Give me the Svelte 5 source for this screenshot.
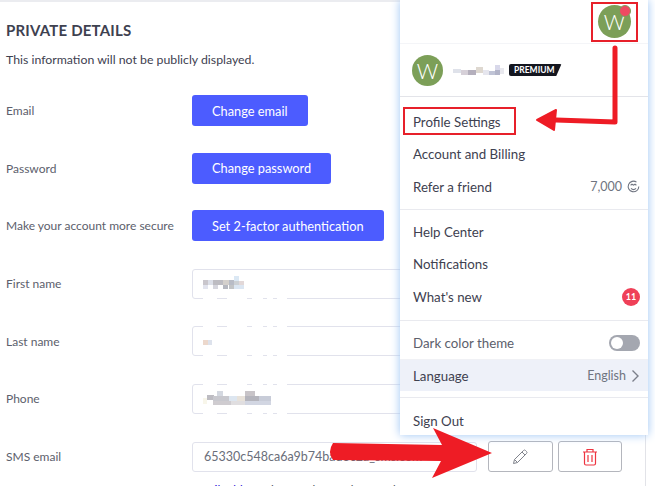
<script>
  const rows = [
    { label: "Email", button: "Change email" },
    { label: "Password", button: "Change password" },
    { label: "Make your account more secure", button: "Set 2-factor authentication" },
    { label: "First name", input: true, blur: "first" },
    { label: "Last name", input: true, blur: "last" },
    { label: "Phone", input: true, blur: "phone" }
  ];

  // white smudges where the censoring ran over the input borders
  const smudge = (y, h) =>
    [[10, 14], [34, 20], [59, 11], [74, 6], [84, 10]].map(([x, w]) => [x, y, w, h, "#fff"]);

  // censored bits of the screenshot: [x, y, w, h, colour]
  const blurs = {
    first: [
      [10, 7, 5, 5, "#c9c6cc"], [15, 7, 5, 5, "#dcdfe8"], [20, 7, 10, 5, "#bdbcc2"], [30, 7, 6, 5, "#d4d0cc"],
      [36, 7, 5, 5, "#b8bcc6"], [41, 3, 5, 5, "#dbe8f4"], [41, 8, 5, 5, "#ccd0d4"], [46, 8, 5, 5, "#e2d8d8"],
      [10, 12, 5, 4, "#e2e4ee"], [20, 12, 5, 4, "#d6d6de"], [30, 12, 5, 4, "#b6b8c0"], [36, 12, 5, 4, "#c2c4c6"],
      [41, 12, 10, 4, "#dbe6f2"], ...smudge(23, 5)
    ],
    last: [[10, 10, 5, 5, "#ecd8cc"], [15, 10, 4, 5, "#dde2ec"], ...smudge(-5, 5), ...smudge(20, 10)],
    phone: [
      [14, 7, 7, 5, "#bdbcc2"], [24, 3, 6, 5, "#d4d8e0"], [20, 8, 16, 5, "#c8c8ce"], [36, 8, 8, 5, "#dde6f0"],
      [44, 8, 8, 5, "#e8e2da"], [52, 3, 10, 5, "#c8c4c8"], [52, 8, 14, 5, "#b4b4bc"], [66, 8, 12, 5, "#c8ccd8"],
      [20, 13, 18, 4, "#cfccd0"], [38, 13, 14, 4, "#e0dee0"], [52, 13, 26, 4, "#d2d6e2"], [10, 10, 4, 6, "#f8f6ea"],
      ...smudge(-7, 6), ...smudge(23, 6)
    ]
  };
  const nameBlur = [
    [0, 5, 8, 4, "#dfe2ea"], [8, 6, 7, 5, "#d6d0d8"], [15, 6, 8, 5, "#b4afbc"], [23, 3, 7, 6, "#ded8d0"],
    [30, 6, 6, 5, "#e6e6ee"], [36, 7, 6, 4, "#c0c4d6"], [42, 1, 5, 5, "#d8d8ea"], [42, 6, 5, 5, "#b2b4c8"],
    [47, 4, 4, 6, "#e8e8ee"]
  ];
</script>

<div class="page">
  <h2>PRIVATE DETAILS</h2>
  <p class="sub">This information will not be publicly displayed.</p>

  {#each rows as row}
    <div class="row">
      <span class="label">{row.label}</span>
      {#if row.input}
        <div class="input">
          <svg class="mosaic" width="100" height="24">
            {#each blurs[row.blur] as b}
              <rect x={b[0]} y={b[1]} width={b[2]} height={b[3]} fill={b[4]} />
            {/each}
          </svg>
        </div>
      {:else}
        <button class="primary">{row.button}</button>
      {/if}
    </div>
  {/each}

  <div class="row">
    <span class="label">SMS email</span>
    <div class="sms">
      <div class="input short">65330c548ca6a9b74bad8c2a_sms.com</div>
      <button class="icon-btn" aria-label="Edit">
        <svg width="16" height="16" viewBox="0 0 16 16" fill="none" stroke="#80838c" stroke-width="1">
          <path d="M1.5 14.5l1-4L11.5 1.5a1.4 1.4 0 0 1 2 0l1 1a1.4 1.4 0 0 1 0 2L5.5 13.5z" />
          <path d="M2.5 10.5l3 3M10 3l3 3" />
        </svg>
      </button>
      <button class="icon-btn" aria-label="Delete">
        <svg width="16" height="18" viewBox="0 0 16 18" fill="none" stroke="#ee3440" stroke-width="1.2">
          <path d="M1 4h14M5 4V1.5h6V4M2.5 4v11.5a1.5 1.5 0 0 0 1.5 1.5h8a1.5 1.5 0 0 0 1.5-1.5V4M6 7v7M10 7v7" />
        </svg>
      </button>
    </div>
  </div>
  <p class="hint"><span>Email address</span> that can be used to send text messages to</p>
</div>

<aside class="menu">
  <div class="menu-top">
    <div class="avatar small">W<span class="dot"></span></div>
  </div>
  <div class="menu-user">
    <div class="avatar">W</div>
    <svg class="name-blur" width="51" height="12">
      {#each nameBlur as b}
        <rect x={b[0]} y={b[1]} width={b[2]} height={b[3]} fill={b[4]} />
      {/each}
    </svg>
    <span class="premium">PREMIUM</span>
  </div>
  <div class="group first">
    <div class="item">Profile Settings</div>
    <div class="item">Account and Billing</div>
    <div class="item">Refer a friend
      <span class="side">7,000
        <svg width="13" height="13" viewBox="0 0 13 13" fill="none" stroke="#6f7480" stroke-width="1.1">
          <path d="M11.8 6.5A5.3 5.3 0 1 1 9.5 2.1" />
          <path d="M3.6 5.2l1.4-1 1.5 1 1.5-1 1.4 1M4 8.3c1.4 1.4 3.6 1.4 5 0" />
        </svg>
      </span>
    </div>
  </div>
  <div class="group second">
    <div class="item">Help Center</div>
    <div class="item">Notifications</div>
    <div class="item">What's new <span class="count">11</span></div>
  </div>
  <div class="group">
    <div class="item muted">Dark color theme <span class="toggle"></span></div>
    <div class="item lang">Language
      <span class="side">English
        <svg width="9" height="14" viewBox="0 0 9 14" fill="none" stroke="#7b7f8a" stroke-width="1.4">
          <path d="M1.5 1.5L7 7l-5.5 5.5" />
        </svg>
      </span>
    </div>
  </div>
  <div class="signout"><div class="item">Sign Out</div></div>
</aside>

<!-- screenshot annotations drawn on top -->
<div class="box box-avatar"></div>
<div class="box box-profile"></div>
<svg class="marks" width="655" height="486">
  <path d="M615 48V122L556 120" fill="none" stroke="#ee1c25" stroke-width="5" stroke-linecap="round" stroke-linejoin="round" />
  <path d="M537 120L556 110L554 130Z" fill="#ee1c25" stroke="#ee1c25" stroke-width="2" stroke-linejoin="round" />
  <path d="M333 443L442 445L433 428L492 453L432 478L441 461L333 460Q327 452 333 443Z" fill="#ee1c25" />
</svg>

<style>
  :global(body) {
    background: #fff;
    overflow: hidden;
    font-family: Lato, "Open Sans", sans-serif;
  }

  .page {
    width: 646px;
    height: 486px;
    box-sizing: border-box;
    padding: 18px 23px 0 6px;
    border-top: 2px solid #ebecf0;
    border-right: 1px solid #e2e3e8;
    overflow: hidden;
    color: #50535e;
    font-size: 12px;
  }

  h2 {
    margin: 0;
    font-size: 15px;
    line-height: 20px;
    color: #3e4150;
    letter-spacing: 0.2px;
  }

  .sub {
    margin: 11px 0 26px;
    line-height: 18px;
    font-size: 12.3px;
    color: #3e4150;
  }

  .row {
    display: flex;
    align-items: center;
    height: 31px;
    margin-bottom: 26.7px;
  }

  .label {
    width: 186px;
    flex: none;
    color: #5c606c;
  }

  .primary {
    height: 31px;
    padding: 0 20px;
    border: none;
    border-radius: 3px;
    background: #4c5cff;
    color: #fff;
    font: inherit;
    font-size: 12.8px;
  }

  .input {
    position: relative;
    flex: 1;
    height: 30px;
    box-sizing: border-box;
    border: 1px solid #e1e2ec;
    border-radius: 3px;
    padding-left: 11px;
    line-height: 28px;
    color: #6a6e7a;
  }

  .mosaic {
    position: absolute;
    left: 0;
    top: 3px;
    overflow: visible;
  }

  .sms {
    display: flex;
    flex: 1;
    gap: 5px;
    align-items: center;
  }

  .short {
    flex: none;
    width: 285px;
    margin-right: 6px;
    white-space: nowrap;
    overflow: hidden;
    font-size: 12.5px;
  }

  .icon-btn {
    width: 64.5px;
    height: 31px;
    display: flex;
    align-items: center;
    justify-content: center;
    background: #fff;
    border: 1px solid #b4b6bd;
    border-radius: 3px;
  }

  .hint {
    margin: -17px 0 0 186px;
    white-space: nowrap;
    color: #50535e;
  }

  .hint span {
    color: #2a10d8;
  }

  .menu {
    position: absolute;
    left: 400px;
    top: 0;
    width: 248px;
    height: 435px;
    background: #fff;
    box-shadow: 0 0 9px #9cc4f4;
    color: #3e4150;
    font-size: 13.3px;
  }

  .menu-top {
    height: 44px;
    display: flex;
    justify-content: flex-end;
    align-items: flex-start;
    padding: 5px 17px 0 0;
    box-sizing: border-box;
    border-bottom: 1px solid #f4f5f8;
  }

  .avatar {
    position: relative;
    width: 31px;
    height: 31px;
    border-radius: 50%;
    background: #7c9f58;
    color: #fff;
    font-size: 21px;
    font-weight: 300;
    display: flex;
    align-items: center;
    justify-content: center;
    flex: none;
  }

  .avatar.small {
    width: 33px;
    height: 33px;
  }

  .dot {
    position: absolute;
    top: 0;
    right: 0;
    width: 10px;
    height: 10px;
    border-radius: 50%;
    background: #ee4a62;
    border: 1px solid #7c9f58;
  }

  .menu-user {
    height: 52px;
    display: flex;
    align-items: center;
    padding-left: 12px;
    border-bottom: 1px solid #e3e4e9;
  }

  .name-blur {
    margin-left: 10px;
  }

  .premium {
    margin-left: 5px;
    background: #14161f;
    color: #fff;
    font-size: 8.5px;
    font-weight: 700;
    line-height: 12px;
    padding: 0 7px 0 5px;
    border-radius: 2px;
    clip-path: polygon(0 0, 100% 0, 90% 100%, 0 100%);
  }

  .group {
    padding: 6px 0;
    border-bottom: 1px solid #e9eaef;
  }

  .group.first {
    padding: 9px 0 6px;
  }

  .group.second {
    padding: 6px 0 7px;
  }

  .item {
    height: 32.3px;
    box-sizing: border-box;
    padding: 0 8px 0 13px;
    display: flex;
    align-items: center;
    justify-content: space-between;
  }

  .side {
    display: flex;
    align-items: center;
    gap: 5px;
    color: #6f7480;
    font-size: 12.5px;
  }

  .count {
    width: 18px;
    height: 18px;
    border-radius: 50%;
    background: #ef4058;
    color: #fff;
    font-size: 9px;
    font-weight: 700;
    display: flex;
    align-items: center;
    justify-content: center;
  }

  .toggle {
    position: relative;
    width: 31px;
    height: 16px;
    border-radius: 8px;
    background: #a4a7b0;
  }

  .toggle::after {
    content: "";
    position: absolute;
    left: 2px;
    top: 2px;
    width: 12px;
    height: 12px;
    border-radius: 50%;
    background: #fff;
  }

  .muted {
    color: #5c606c;
  }

  .lang {
    background: #eef1f9;
    border-top: 1px solid #f0f1f5;
  }

  .signout {
    padding-top: 6px;
  }

  .box {
    position: absolute;
    border: 2px solid #e7202a;
    box-sizing: border-box;
  }

  .box-avatar {
    left: 591px;
    top: 2px;
    width: 47px;
    height: 40px;
  }

  .box-profile {
    left: 403px;
    top: 107px;
    width: 113px;
    height: 28px;
  }

  .marks {
    position: absolute;
    left: 0;
    top: 0;
  }
</style>
